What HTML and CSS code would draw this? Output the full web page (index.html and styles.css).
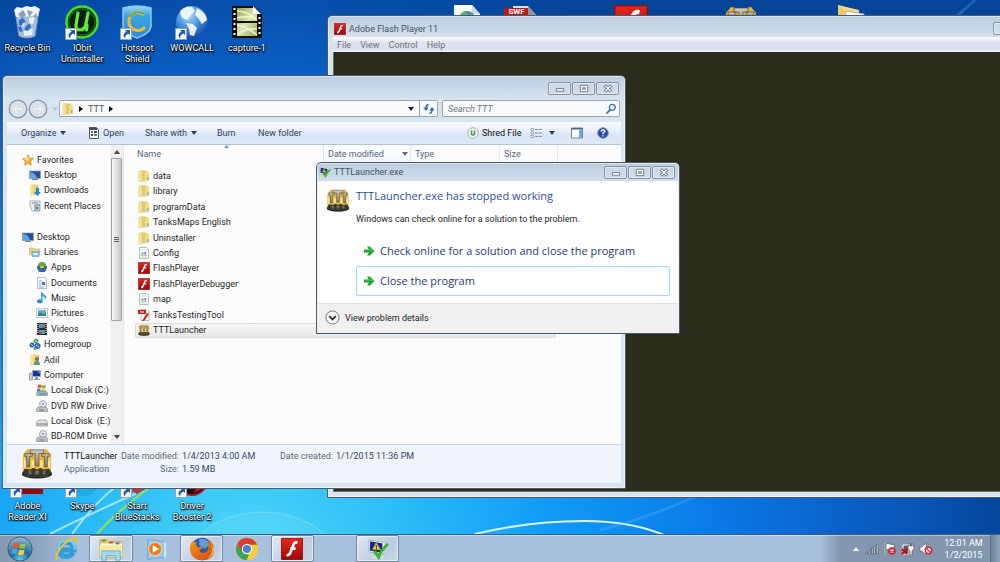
FILE: index.html
```html
<!DOCTYPE html>
<html lang="en">
<head>
<meta charset="utf-8">
<title>Desktop</title>
<link rel="stylesheet" href="styles.css">
</head>
<body>
<svg class="sprite" aria-hidden="true">
  <defs>
    <linearGradient id="gRed" x1="0" y1="0" x2="0" y2="1"><stop offset="0" stop-color="#e8261c"/><stop offset="1" stop-color="#9c0707"/></linearGradient>
    <linearGradient id="gFold" x1="0" y1="0" x2="1" y2="0"><stop offset="0" stop-color="#fbeea6"/><stop offset="1" stop-color="#dcbb52"/></linearGradient>
    <linearGradient id="gShield" x1="0" y1="0" x2="0" y2="1"><stop offset="0" stop-color="#9bd7f5"/><stop offset=".3" stop-color="#3ba5e6"/><stop offset="1" stop-color="#2a8ad6"/></linearGradient>
    <radialGradient id="gGlobe" cx=".4" cy=".3" r=".7"><stop offset="0" stop-color="#b5dcf8"/><stop offset=".5" stop-color="#4b97e0"/><stop offset="1" stop-color="#1c4bb2"/></radialGradient>
    <radialGradient id="gOrb" cx=".5" cy=".95" r=".9"><stop offset="0" stop-color="#5fd3ee"/><stop offset=".45" stop-color="#20689e"/><stop offset="1" stop-color="#8fb4cf"/></radialGradient>
    <linearGradient id="gFilm" x1="0" y1="0" x2="1" y2="1"><stop offset="0" stop-color="#8f9f45"/><stop offset=".5" stop-color="#dfe6b4"/><stop offset="1" stop-color="#94a74d"/></linearGradient>
    <linearGradient id="gFox" x1="0" y1="0" x2="1" y2="1"><stop offset="0" stop-color="#f79a1c"/><stop offset="1" stop-color="#d9440c"/></linearGradient>
    <linearGradient id="gMetal" x1="0" y1="0" x2="0" y2="1"><stop offset="0" stop-color="#cdccc6"/><stop offset="1" stop-color="#7c7b74"/></linearGradient>
  </defs>
  <symbol id="shortcut" viewBox="0 0 12 12"><path fill="#f4f8fc" stroke="#8ea4bb" d="M.5.5h11v11H.5z"/><path fill="#2358a5" d="M5 2h5v5L8.300 5.400C6 6.500 5 8 5.200 10.200 2.400 8 3.400 5 6.600 3.700z"/></symbol>
  <symbol id="recycle" viewBox="0 0 32 34"><path fill="#b9cbdc" stroke="#8ea6bb" d="M4 5l4 26q8 4 16 0l4-26z" opacity=".9"/><path fill="#eef4f9" d="M3 5l3-3 5 1 4-2 5 1 4-1 5 3-2 7-22 1z"/><path fill="#8da3b7" d="M7 9l5-4 3 5-4 4zM16 5l6 2-4 5zM22 11l4-3-1 7z"/><path fill="#fff" opacity=".75" d="M9 13l5 3-1 5-4 2zM18 13l6-1-2 7-4 1zM13 25l9-1-1 6-8 1z"/><path fill="#2d6fd0" d="M8 15l4-2 3 4-3 1-1 3-3-1zM15 21l4-3 1 4-3 4-4-1zM7 22l3-1 2 5-3 1z"/></symbol>
  <symbol id="iobit" viewBox="0 0 34 34"><circle cx="17" cy="17" r="15.500" fill="#0b1b0c" stroke="#4ddd23" stroke-width="2.500"/><circle cx="17" cy="17" r="13" fill="none" stroke="#155b16" stroke-width="2"/><path fill="none" stroke="#62ee30" stroke-width="3.200" stroke-linecap="round" d="M13 8l-2 12q-.5 5 4 5t6-6l2-11M22 20l-.4 5"/></symbol>
  <symbol id="hotspot" viewBox="0 0 32 34"><path fill="url(#gShield)" stroke="#8cc8ea" stroke-width="1.500" d="M2 3q14-4 28 0v19q-2 7-14 11Q4 29 2 22z"/><path fill="none" stroke="#f0ba2f" stroke-width="3" d="M23 10a9 9 0 1 0 1 12"/><path fill="none" stroke="#589c57" stroke-width="1.500" d="M23 9a10 10 0 0 0-14 3"/></symbol>
  <symbol id="wowcall" viewBox="0 0 34 34"><circle cx="17" cy="17" r="16" fill="url(#gGlobe)"/><path fill="#f2f8fd" opacity=".95" d="M5 6q6-6 12-4l3 4-5 5-2 4-4-1-3-3zM11 18l7 1 4 4-3 8-4-1-1-6zM22 3q9 4 10 12l-5 4-4-6-3-3z"/></symbol>
  <symbol id="capture" viewBox="0 0 30 34"><path fill="#111" d="M0 1h22l8 8v24H0z"/><path fill="url(#gFilm)" d="M5 3h16l4 6v7H5zM5 18h20v13H5z"/><path fill="none" stroke="#f1f5d5" stroke-width="1.500" d="M5 6q10 0 20 9M5 13q12-4 20 2M5 20q9 1 20 10M6 29q9-6 19-5"/><path fill="#fff" d="M21 1l8 8h-8z"/><path stroke="#fff" stroke-width="2" stroke-dasharray="2 3" d="M2.500 3v29M27.500 12v20"/></symbol>
  <symbol id="docglobe" viewBox="0 0 28 34"><path fill="#fff" d="M1 0h18l8 9v25H1z"/><path fill="#cbd6df" d="M19 0l8 9h-8z"/><circle cx="14" cy="14" r="8" fill="#3688bd"/><path fill="#5cb760" d="M8 8l5-1 3 3-5 5zM17 7l4 5-3 2z"/></symbol>
  <symbol id="swf" viewBox="0 0 34 34"><path fill="#d8dde1" d="M9 1h15l8 9v24H9z"/><path fill="#8f979e" d="M24 1l8 9h-8z"/><path fill="#c51519" d="M0 3h24v10H0z"/></symbol>
  <symbol id="flash" viewBox="0 0 24 24"><path fill="url(#gRed)" stroke="#8b1411" d="M.5.5h23v23H.5z"/><path fill="none" stroke="#fff" stroke-width="3" d="M18 5q-4-1-5 4l-2 5q-1 5-5 5M10 11.500h6"/></symbol>
  <symbol id="tank" viewBox="0 0 34 34"><path fill="#eeb62f" d="M2 8l5-6 10 2 10-2 5 6v17H2z"/><path fill="#fce48a" d="M3 11l4 7-4 6zM31 11l-4 7 4 6zM11 14h3v9h-3zM20 14h3v9h-3z"/><ellipse cx="17" cy="29" rx="16" ry="4.500" fill="#25261f"/><path fill="#383a30" d="M1 28l3-5 6 1 3-2 4 2 4-2 3 2 6-1 3 5-5 4H6z"/><path fill="url(#gMetal)" stroke="#4c4a42" stroke-width=".7" d="M4 7h8v3H9v11H6V10H4zM22 7h8v3h-2v11h-3V10h-3zM10 3h14v4h-5v13h-4V7h-5z"/><path fill="#6a6f5e" d="M8 25h3v4H8zM15 25h4v4h-4zM23 25h3v4h-3z"/></symbol>
  <symbol id="openfolder" viewBox="0 0 28 34"><path fill="#f4db81" d="M1 0l21 5v29H1z"/><path fill="#fff" stroke="#aaa" d="M9 6l18 3v25H9z"/><path fill="#e8c96b" d="M1 0l8 7v27l-8-5z"/></symbol>
  <symbol id="reader" viewBox="0 0 32 34"><path fill="#930b12" d="M0 0h32v31H0z"/></symbol>
  <symbol id="skype" viewBox="0 0 34 34"><rect x="1" y="0" width="32" height="33" rx="14" fill="#19aee5"/></symbol>
  <symbol id="bluestacks" viewBox="0 0 34 34"><path fill="#23569c" d="M4 12l13-5 14 7v9l-14 8-13-8z"/><circle cx="17" cy="25" r="5" fill="#d23136"/></symbol>
  <symbol id="booster" viewBox="0 0 34 34"><circle cx="17" cy="17" r="15" fill="#201012" stroke="#a9171c" stroke-width="2"/><path fill="#d91d22" d="M18 30l12-16-1 11z"/></symbol>

  <symbol id="folder" viewBox="0 0 12 12"><path fill="url(#gFold)" stroke="#d9bd62" stroke-width=".5" d="M1 1l4-.5V11L1 12zM5 1h4v10H5z"/><path fill="#f4dd87" d="M7 2h4v9H7z"/><path fill="#7cb6ad" d="M9 7h1.500v3H9z"/></symbol>
  <symbol id="star" viewBox="0 0 12 12"><path fill="#fcb03e" stroke="#da7b20" stroke-width=".7" d="M6 .7l1.600 3.500 3.800.5-2.800 2.600.8 3.900L6 9.300 2.600 11.200l.8-3.900L.6 4.700l3.800-.5z"/><path fill="#ffe28e" d="M6 2l1 3-3 3 .5-2L2 5z"/></symbol>
  <symbol id="monitor" viewBox="0 0 12 12"><path fill="#264f9d" stroke="#8799ae" stroke-width=".7" d="M.5 2h11v7.500H.5z"/><path fill="#5aa5e3" d="M1 3q5 0 7 6H1z"/><path fill="#6c7f91" d="M3 10h6v1H3z"/></symbol>
  <symbol id="download" viewBox="0 0 12 12"><path fill="url(#gFold)" d="M1 1l5-1v11l-5 1zM6 1h3v10H6z"/><path fill="#2488d8" d="M7 4h3v4h2l-3.500 4L5 8h2z"/></symbol>
  <symbol id="recent" viewBox="0 0 12 12"><path fill="#eef1f2" stroke="#87969e" stroke-width=".7" d="M1 1h10v4H6v6H3L1 6z"/><path stroke="#77858b" d="M3 3h6"/><path fill="#b9c8ce" stroke="#748890" stroke-width=".7" d="M6 5h5v6H6z"/><path fill="#467e9b" d="M7 7h2v2H7z"/></symbol>
  <symbol id="libraries" viewBox="0 0 12 12"><path fill="#ecd47a" stroke="#c7a33d" stroke-width=".5" d="M.5 2h4l1 1h5v6H.5z"/><path fill="#77bcdf" d="M2 5h9.500L10 11H3z"/><path fill="#e7f6fb" d="M4 7h5v2H4z"/></symbol>
  <symbol id="apps" viewBox="0 0 12 12"><path fill="#61a83e" d="M2 5Q2 1 6 1t4 4z"/><path fill="#34679d" d="M1 5h10v2l-2 4H3L1 7z"/><path fill="#d8be3b" d="M4 5h4v2H4z"/></symbol>
  <symbol id="docs" viewBox="0 0 12 12"><path fill="#fbfdfe" stroke="#92a0ae" stroke-width=".7" d="M1.500.5h7l2 2v9h-9z"/><path stroke="#80a8cb" d="M3 4h3M3 6h2M3 8h2M3 10h5"/><path fill="#3075ae" d="M6 5h3v3H6z"/></symbol>
  <symbol id="music" viewBox="0 0 12 12"><ellipse cx="3.800" cy="9.300" rx="2.800" ry="2" fill="#1f8fd3"/><path fill="#37a4e2" d="M5 0h1q1 2 4 4 1 2-1 4 0-3-2.500-4v5.500H5z"/></symbol>
  <symbol id="pictures" viewBox="0 0 12 12"><path fill="#f9fbfc" stroke="#9daeb6" stroke-width=".7" d="M.5 1.500h11v9H.5z"/><path fill="#62b5e3" d="M2 3h8v6H2z"/><path fill="#328675" d="M2 9V7l3-2 2 2 3-1v3z"/></symbol>
  <symbol id="videos" viewBox="0 0 12 12"><path fill="#272e33" d="M1 0h10v12H1z"/><path fill="#4a9bcb" d="M3 1h6v4H3zM3 7h6v4H3z"/><path fill="#a3632f" d="M6 3h3v2H6zM3 9h3v2H3z"/><path stroke="#fff" stroke-dasharray="1 1" d="M1.900 1v10M10.100 1v10"/></symbol>
  <symbol id="homegroup" viewBox="0 0 12 12"><circle cx="3" cy="7" r="2.500" fill="#2459bd"/><circle cx="7" cy="3" r="2.500" fill="#45a93f"/><circle cx="8.500" cy="8" r="3" fill="#2d63bd"/><path fill="none" stroke="#e5f6ff" stroke-width=".8" d="M1.500 6l3 2M5.500 2l3 2M7 7l3 2"/><circle cx="6" cy="10.500" r="1.500" fill="#4cb03c"/></symbol>
  <symbol id="user" viewBox="0 0 12 12"><path fill="url(#gFold)" d="M1 1l5-1v11l-5 1zM5 1h5v10H5z"/><circle cx="8" cy="5" r="2" fill="#8e6549"/><path fill="#4d9979" d="M5 11q0-4 3-4t3 4z"/></symbol>
  <symbol id="computer" viewBox="0 0 12 12"><path fill="#c6ccd1" stroke="#717c85" stroke-width=".6" d="M.5 4h3v7h-3z"/><path fill="#1431a8" stroke="#9babb9" d="M3.500 1.500h8v6h-8z"/><path fill="#5b90df" d="M8 2h3v3z"/><path fill="#88939c" d="M6 8h3v2h2v1H5v-1h1z"/></symbol>
  <symbol id="diskc" viewBox="0 0 12 12"><path fill="#ea542a" d="M2 1q2-1 3.500 0L5 4q-2-.6-3.500 0z"/><path fill="#78b536" d="M6 1q2 1 4 0l-.6 3q-2 1-3.800 0z"/><path fill="#3a81d0" d="M1 5q2-1 3.700 0L4 8H1z"/><path fill="#f6bf2d" d="M5.300 5q2 1 4 0L9 8H5z"/><path fill="#a8b2b9" stroke="#65727b" stroke-width=".5" d="M2 7h8l1.500 2v2.500H.5V9z"/><path stroke="#348bbb" d="M3 10h7"/></symbol>
  <symbol id="dvd" viewBox="0 0 12 12"><circle cx="7" cy="4" r="3.500" fill="#e6eaec" stroke="#7f8a91" stroke-width=".7"/><circle cx="7" cy="4" r="1" fill="#818d95"/><path fill="#bfc4c7" stroke="#777f84" stroke-width=".6" d="M2 7h8l1.500 2v2.500H.5V9z"/><path stroke="#697278" d="M3 10h5"/></symbol>
  <symbol id="disk" viewBox="0 0 12 12"><path fill="#dfe3e5" stroke="#777f84" stroke-width=".6" d="M2 5h8l1.500 2.500V11H.5V7.500z"/><path fill="#aab0b4" d="M1 8h10v2.500H1z"/><path fill="#53a446" d="M9 8.500h1v1H9z"/></symbol>
  <symbol id="config" viewBox="0 0 12 12"><path fill="#fff" stroke="#969da1" stroke-width=".7" d="M1.500.5h7l2 2v9h-9z"/><path stroke="#cad1d3" d="M2.500 3h6M3 10h6"/><path fill="#4d9a9b" d="M3.500 5.500h2v2h-2z"/><path fill="#5671af" d="M6.500 5H8v2.500H6.500z"/><path stroke="#9aa4a6" stroke-width=".6" d="M2.500 8.500h7"/></symbol>
  <symbol id="tool" viewBox="0 0 12 12"><path fill="#fff" stroke="#a0a0a0" stroke-width=".7" d="M3 .5h6l2 2v9H3z"/><path fill="#c81a17" d="M0 1h8v4H0zM9 4l2 1-5 7H4z"/><path stroke="#fff" d="M2 3h4"/></symbol>
  <symbol id="openicon" viewBox="0 0 12 12"><path fill="#fff" stroke="#4d5966" d="M1.500 .5h7l2 2v9h-9z"/><path fill="#404a58" d="M1 1h8v2H1z"/><path fill="#d6472b" d="M3 4h2v2H3z"/><path fill="#2551ae" d="M6 4h3v2H6zM3 7h2v2H3z"/><path fill="#4aa242" d="M6 7h3v2H6z"/></symbol>

  <symbol id="shred" viewBox="0 0 12 12"><circle cx="6" cy="6" r="5.300" fill="#edf3f5" stroke="#a9b4ba"/><path fill="none" stroke="#47973b" stroke-width="1.500" d="M4.500 3.500v3q0 1.500 1.500 1.500t1.500-1.500v-3"/></symbol>
  <symbol id="views" viewBox="0 0 12 12"><path fill="#fff" stroke="#7c8ba0" stroke-width=".7" d="M1 1.500h2.500v2H1zM1 5h2.500v2H1zM1 8.500h2.500v2H1z"/><path stroke="#7f8fa6" stroke-dasharray="3 .7" d="M5 2.500h7M5 6h7M5 9.500h7"/></symbol>
  <symbol id="pane" viewBox="0 0 12 12"><path fill="#fdfeff" stroke="#51657e" stroke-width=".8" d="M.5 1h11v10H.5z"/><path fill="#51657e" d="M.5 1h11v1.500H.5z"/><path fill="#64b1d5" d="M8 3h3v7.500H8z"/></symbol>
  <symbol id="help" viewBox="0 0 12 12"><circle cx="6" cy="6" r="5.300" fill="#2349ae" stroke="#8693a9"/><path fill="none" stroke="#fff" stroke-width="1.300" d="M4 4.600q.2-1.600 2-1.600t2 1.300Q8 5.200 6 6v1.200M6 8.300v1.200"/></symbol>
  <symbol id="search" viewBox="0 0 12 12"><circle cx="7.300" cy="4.300" r="3" fill="#e4f3fc" stroke="#356faf" stroke-width="1.200"/><path stroke="#356faf" stroke-width="1.800" stroke-linecap="round" d="M5 6.800L2 10"/></symbol>
  <symbol id="refresh" viewBox="0 0 12 12"><path fill="none" stroke="#2f6db5" stroke-width="1.500" d="M5.500 1.500Q3 2 3 5M6.500 10.500Q9 10 9 7"/><path fill="#2f6db5" d="M.3 4.500h5.400L3 8zM6.300 7.500h5.400L9 4z"/></symbol>
  <symbol id="caret" viewBox="0 0 6 4"><path fill="currentColor" d="M0 0h6L3 4z"/></symbol>
  <symbol id="caretr" viewBox="0 0 4 6"><path fill="#111" d="M0 0v6l4-3z"/></symbol>
  <symbol id="navback" viewBox="0 0 20 20"><circle cx="10" cy="10" r="8.700" fill="#dce4ec" stroke="#8d9aaa" stroke-width="1.400"/><path fill="#edf2f6" stroke="#ccd5de" stroke-width=".6" d="M4.500 10L9 5.500h2.200L8.500 8.700h7v2.600h-7l2.700 3.200H9z"/></symbol>
  <symbol id="go" viewBox="0 0 12 12"><path fill="#16a12c" d="M1 4.500h5L4 1.500h2.800L11.500 6 6.800 10.500H4l2-3H1z"/><path fill="#3fc948" d="M2 5.300h6L6 2l5 4H2z"/></symbol>
  <symbol id="chev" viewBox="0 0 16 16"><circle cx="8" cy="8" r="7" fill="#f5f5f5" stroke="#777"/><path fill="none" stroke="#333" stroke-width="2" d="M4.500 6.500L8 10l3.500-3.500"/></symbol>
  <symbol id="min" viewBox="0 0 10 10"><path fill="#fff" stroke="#68788b" d="M1 5h8v3H1z"/></symbol>
  <symbol id="max" viewBox="0 0 10 10"><path fill="#fff" stroke="#68788b" d="M1 1.500h8v7H1z"/><path fill="#aebccc" stroke="#68788b" stroke-width=".8" d="M3.500 4h3v2h-3z"/></symbol>
  <symbol id="close" viewBox="0 0 10 10"><path stroke="#68788b" stroke-width="3.600" d="M1.500 1.500l7 7M8.500 1.500l-7 7"/><path stroke="#fff" stroke-width="1.500" d="M2 2l6 6M8 2L2 8"/></symbol>

  <symbol id="problem" viewBox="0 0 24 24"><ellipse cx="12" cy="21" rx="7" ry="2.500" fill="#d6dadd"/><path fill="#eef3f6" stroke="#aab6bf" d="M2 2l18 3-2 13L2 15z"/><path fill="#1224a5" d="M3.500 3.500L17 6l-1 10-13-2.500z"/><path fill="#ffd531" stroke="#b08d0c" stroke-width=".6" d="M10 5l5 8-9-.5z"/><path stroke="#222" stroke-width="1.300" d="M10.200 8v2.500M10.300 11.300v1"/><path fill="#35c727" stroke="#168e16" stroke-width=".6" d="M7 15l2.500-1.500 3 4.500Q16 10 22 6l1.500 1.500Q16 14 13 23.500z"/></symbol>
  <symbol id="orb" viewBox="0 0 28 28"><circle cx="14" cy="14" r="13" fill="url(#gOrb)" stroke="#335779"/><path fill="#f1582b" d="M7 8q3-2 6-.3L12 13q-3-1.500-6 0z"/><path fill="#8cc63c" d="M14.300 8q3 1.500 6.200-.2L19.200 13q-3 1.700-6 0z"/><path fill="#44a5e8" d="M5.700 14.300q3-1.500 6 0l-1.300 5.200q-3-1.500-6 0z"/><path fill="#fcc935" d="M13 14.500q3 1.500 6 0L17.800 20q-3 1.500-6 0z"/></symbol>
  <symbol id="ie" viewBox="0 0 28 28"><path fill="none" stroke="#2f9fdc" stroke-width="5.500" d="M7 15h15.500Q22 7 14.500 7T7 14.500t7.500 7.500q5 0 7-4"/><path fill="none" stroke="#7fd4f7" stroke-width="2" d="M5.500 15q0-10 9-10t9 9.500"/><path fill="none" stroke="#f2c12c" stroke-width="2.200" d="M5 25q-4-2 3-12Q17 2 24 2q3 .5 1 6"/></symbol>
  <symbol id="explorer" viewBox="0 0 28 28"><path fill="#e7c668" stroke="#c8a13f" stroke-width=".7" d="M2 4h8l2 2h14v17H2z"/><path fill="#fff5c9" d="M3 8h23v3H3z"/><path fill="#f8e7a0" d="M2 10h24v12H2z"/><path stroke="#46a845" stroke-width="2" d="M4 5h4"/><path stroke="#cf4c39" stroke-width="2" d="M12 7h4"/><path stroke="#3b80c7" stroke-width="2" d="M19 8h4"/><path fill="#9cdbf2" stroke="#549cc3" stroke-width=".7" d="M4 16h20v10h-5v-5H9v5H4z"/></symbol>
  <symbol id="wmp" viewBox="0 0 28 28"><path fill="#9acdea" stroke="#65a5cb" d="M5 4l17 2v17L5 25z"/><path fill="#d5eefa" opacity=".8" d="M22 6l3 2v15h-3z"/><circle cx="13" cy="14" r="7" fill="#f27718" stroke="#ffd5a6"/><path fill="#fff" d="M10.500 10l7 4-7 4z"/></symbol>
  <symbol id="firefox" viewBox="0 0 28 28"><circle cx="14" cy="14" r="12" fill="#2b5aa9"/><path fill="#5b9ed9" d="M11 3q8-1 11 5l-4 6-7-4z"/><path fill="url(#gFox)" d="M4 5q2 2 5 2-3 3 1 5l5-1q1 2-4 4 1 4 6 3 3-1 4-4 0-5-3-7 3 0 4 2 0-3-3-6 8 4 8 11 0 12-13 12Q1 25 1 13q0-5 3-8z"/><path fill="#ffdc43" opacity=".8" d="M24 9q4 10-5 15 7-1 8-10z"/></symbol>
  <symbol id="chrome" viewBox="0 0 28 28"><circle cx="14" cy="14" r="12" fill="#f5cf36"/><path fill="#dc3d31" d="M3.300 8.500A12 12 0 0 1 25 9.500H14L8.500 17z"/><path fill="#40a34d" d="M3.300 8.500L9 17l7 3-2.500 6A12 12 0 0 1 3.300 8.500z"/><circle cx="14" cy="14" r="5.600" fill="#fff"/><circle cx="14" cy="14" r="4.400" fill="#4385ce"/></symbol>
  <symbol id="signal" viewBox="0 0 14 12"><path fill="#dde3e8" stroke="#454f59" stroke-width=".6" d="M1 9h1.500v2H1zM4 7h1.500v4H4zM6.500 5H8v6H6.500zM9 3h1.500v8H9zM11.500 1H13v10h-1.500z"/></symbol>
  <symbol id="flag" viewBox="0 0 14 12"><path stroke="#555" stroke-width="2.200" d="M2 0v12"/><path stroke="#fff" d="M2 0v12"/><path fill="#fff" stroke="#555" stroke-width=".7" d="M3 1q3-1 4 0t4 0v6q-3 1-4 0T3 7z"/><circle cx="9" cy="8" r="3.800" fill="#d8222a"/><path stroke="#fff" stroke-width="1.200" d="M7.500 6.500l3 3M10.500 6.500l-3 3"/></symbol>
  <symbol id="battery" viewBox="0 0 14 12"><path fill="#585f67" stroke="#fff" d="M2 2h6v9H2z"/><path fill="#fff" stroke="#444" stroke-width=".6" d="M7 3h1V0h1v3h2V0h1v3h1v3l-2 2v4H9V8L7 6z"/><path stroke="#d4000b" stroke-width="2" d="M1 6l5 5M6 6l-5 5"/></symbol>
  <symbol id="speaker" viewBox="0 0 14 12"><path fill="#fff" stroke="#555" stroke-width=".6" d="M1 4h2l4-4v12L3 8H1z"/><circle cx="9.500" cy="7.500" r="3.200" fill="#fff" stroke="#d8222a" stroke-width="1.500"/><path stroke="#d8222a" stroke-width="1.300" d="M7.500 5.500l4 4"/></symbol>
</svg>

<div class="screen">
  <main class="desktop">
    <svg class="rays" viewBox="0 0 1000 534" preserveAspectRatio="none" aria-hidden="true">
      <g fill="none">
        <path class="halo" d="M200 534Q225 512 262 512T325 534"/>
        <path class="ray-soft" d="M50 534Q85 516 155 485M72 534Q94 503 118 485"/>
        <path class="ray-green" d="M97 534Q118 510 153 485"/>
        <path class="ray-white" d="M475 534Q530 521 585 521 630 521 664 535"/>
        <path class="ray-far" d="M600 530Q650 518 710 490M957 16L975 0"/>
      </g>
    </svg>
    <div class="icon-grid">
      <a class="shortcut c1" href="#"><span class="pic"><svg><use href="#recycle"/></svg></span>Recycle Bin</a>
      <a class="shortcut c2" href="#"><span class="pic"><svg><use href="#iobit"/></svg><svg class="badge"><use href="#shortcut"/></svg></span>IObit<br>Uninstaller</a>
      <a class="shortcut c3" href="#"><span class="pic"><svg><use href="#hotspot"/></svg><svg class="badge"><use href="#shortcut"/></svg></span>Hotspot<br>Shield</a>
      <a class="shortcut c4" href="#"><span class="pic"><svg><use href="#wowcall"/></svg><svg class="badge"><use href="#shortcut"/></svg></span>WOWCALL</a>
      <a class="shortcut c5" href="#"><span class="pic"><svg><use href="#capture"/></svg></span>capture-1</a>
      <a class="shortcut c9" href="#" aria-label="Web page"><span class="pic"><svg><use href="#docglobe"/></svg></span></a>
      <a class="shortcut c10" href="#"><span class="pic"><svg><use href="#swf"/></svg><b class="swf-label">SWF</b></span></a>
      <a class="shortcut c12" href="#" aria-label="Flash"><span class="pic"><svg><use href="#flash"/></svg></span></a>
      <a class="shortcut c14" href="#" aria-label="Launcher"><span class="pic"><svg><use href="#tank"/></svg></span></a>
      <a class="shortcut c16" href="#" aria-label="Folder"><span class="pic"><svg><use href="#openfolder"/></svg></span></a>
    </div>
    <div class="icon-grid">
      <a class="shortcut c1" href="#"><span class="pic"><svg><use href="#reader"/></svg><svg class="badge"><use href="#shortcut"/></svg></span>Adobe<br>Reader XI</a>
      <a class="shortcut c2" href="#"><span class="pic"><svg><use href="#skype"/></svg><svg class="badge"><use href="#shortcut"/></svg></span>Skype</a>
      <a class="shortcut c3" href="#"><span class="pic"><svg><use href="#bluestacks"/></svg><svg class="badge"><use href="#shortcut"/></svg></span>Start<br>BlueStacks</a>
      <a class="shortcut c4" href="#"><span class="pic"><svg><use href="#booster"/></svg><svg class="badge"><use href="#shortcut"/></svg></span>Driver<br>Booster 2</a>
    </div>

    <section class="window flash-window" aria-label="Adobe Flash Player 11">
      <header class="titlebar">
        <svg class="title-icon"><use href="#flash"/></svg><h2 class="title">Adobe Flash Player 11</h2>
        <div class="controls"><button class="ctl" aria-label="Minimize"></button></div>
      </header>
      <nav class="menubar"><button>File</button><button>View</button><button>Control</button><button>Help</button></nav>
      <div class="stage"></div>
    </section>

    <section class="window explorer-window" aria-label="TTT">
      <header class="titlebar">
        <div class="controls">
          <button class="ctl" aria-label="Minimize"><svg><use href="#min"/></svg></button>
          <button class="ctl" aria-label="Maximize"><svg><use href="#max"/></svg></button>
          <button class="ctl" aria-label="Close"><svg><use href="#close"/></svg></button>
        </div>
      </header>
      <div class="address-row">
        <div class="nav-buttons">
          <button aria-label="Back"><svg class="nav"><use href="#navback"/></svg></button>
          <button aria-label="Forward"><svg class="nav flip"><use href="#navback"/></svg></button>
          <button class="faint" aria-label="Recent pages"><svg class="caret"><use href="#caret"/></svg></button>
        </div>
        <div class="address">
          <svg class="ico"><use href="#folder"/></svg>
          <svg class="caretr"><use href="#caretr"/></svg>
          <button class="crumb">TTT</button>
          <svg class="caretr"><use href="#caretr"/></svg>
          <button class="drop" aria-label="Previous locations"><svg class="caret"><use href="#caret"/></svg></button>
          <button class="reload" aria-label="Refresh"><svg class="ico"><use href="#refresh"/></svg></button>
        </div>
        <label class="search"><input type="text" placeholder="Search TTT" aria-label="Search TTT"><svg class="ico"><use href="#search"/></svg></label>
      </div>
      <div class="toolbar">
        <button class="t-organize">Organize <svg class="caret"><use href="#caret"/></svg></button>
        <button class="t-open"><svg class="ico"><use href="#openicon"/></svg>Open</button>
        <button class="t-share">Share with <svg class="caret"><use href="#caret"/></svg></button>
        <button class="t-burn">Burn</button>
        <button>New folder</button>
        <button class="t-shred"><svg class="ico"><use href="#shred"/></svg>Shred File</button>
        <button class="t-views" aria-label="Change view"><svg class="ico"><use href="#views"/></svg><svg class="caret"><use href="#caret"/></svg></button>
        <button class="t-pane" aria-label="Preview pane"><svg class="ico"><use href="#pane"/></svg></button>
        <button aria-label="Help"><svg class="ico"><use href="#help"/></svg></button>
      </div>
      <div class="browser">
        <nav class="tree">
          <a class="l1" href="#"><svg class="ico"><use href="#star"/></svg>Favorites</a>
          <a class="l2" href="#"><svg class="ico"><use href="#monitor"/></svg>Desktop</a>
          <a class="l2" href="#"><svg class="ico"><use href="#download"/></svg>Downloads</a>
          <a class="l2" href="#"><svg class="ico"><use href="#recent"/></svg>Recent Places</a>
          <span class="blank"></span>
          <a class="l1" href="#"><svg class="ico"><use href="#monitor"/></svg>Desktop</a>
          <a class="l2" href="#"><svg class="ico"><use href="#libraries"/></svg>Libraries</a>
          <a class="l3" href="#"><svg class="ico"><use href="#apps"/></svg>Apps</a>
          <a class="l3" href="#"><svg class="ico"><use href="#docs"/></svg>Documents</a>
          <a class="l3" href="#"><svg class="ico"><use href="#music"/></svg>Music</a>
          <a class="l3" href="#"><svg class="ico"><use href="#pictures"/></svg>Pictures</a>
          <a class="l3" href="#"><svg class="ico"><use href="#videos"/></svg>Videos</a>
          <a class="l2" href="#"><svg class="ico"><use href="#homegroup"/></svg>Homegroup</a>
          <a class="l2" href="#"><svg class="ico"><use href="#user"/></svg>Adil</a>
          <a class="l2" href="#"><svg class="ico"><use href="#computer"/></svg>Computer</a>
          <a class="l3" href="#"><svg class="ico"><use href="#diskc"/></svg>Local Disk (C:)</a>
          <a class="l3" href="#"><svg class="ico"><use href="#dvd"/></svg>DVD RW Drive (</a>
          <a class="l3" href="#"><svg class="ico"><use href="#disk"/></svg>Local Disk&nbsp; (E:)</a>
          <a class="l3" href="#"><svg class="ico"><use href="#dvd"/></svg>BD-ROM Drive</a>
        </nav>
        <div class="scrollbar">
          <svg class="caret up"><use href="#caret"/></svg>
          <div class="thumb"><i></i><i></i><i></i></div>
          <svg class="caret down"><use href="#caret"/></svg>
        </div>
        <table class="files">
          <thead><tr><th class="sorted">Name<svg class="caret up"><use href="#caret"/></svg></th><th class="hot">Date modified<svg class="caret"><use href="#caret"/></svg></th><th>Type</th><th>Size</th></tr></thead>
          <tbody>
            <tr><td><svg class="ico"><use href="#folder"/></svg>data</td></tr>
            <tr><td><svg class="ico"><use href="#folder"/></svg>library</td></tr>
            <tr><td><svg class="ico"><use href="#folder"/></svg>programData</td></tr>
            <tr><td><svg class="ico"><use href="#folder"/></svg>TanksMaps English</td></tr>
            <tr><td><svg class="ico"><use href="#folder"/></svg>Uninstaller</td></tr>
            <tr><td><svg class="ico"><use href="#config"/></svg>Config</td></tr>
            <tr><td><svg class="ico"><use href="#flash"/></svg>FlashPlayer</td></tr>
            <tr><td><svg class="ico"><use href="#flash"/></svg>FlashPlayerDebugger</td></tr>
            <tr><td><svg class="ico"><use href="#config"/></svg>map</td></tr>
            <tr><td><svg class="ico"><use href="#tool"/></svg>TanksTestingTool</td></tr>
            <tr class="selected"><td><svg class="ico"><use href="#tank"/></svg>TTTLauncher</td></tr>
          </tbody>
        </table>
      </div>
      <footer class="details">
        <svg class="big"><use href="#tank"/></svg>
        <dl class="facts">
          <dd class="name">TTTLauncher</dd><dt>Date modified:</dt><dd>1/4/2013 4:00 AM</dd><dt>Date created:</dt><dd>1/1/2015 11:36 PM</dd>
          <dd class="kind">Application</dd><dt>Size:</dt><dd>1.59 MB</dd>
        </dl>
      </footer>
    </section>

    <section class="window dialog" role="dialog" aria-label="TTTLauncher.exe">
      <header class="titlebar">
        <svg class="title-icon"><use href="#problem"/></svg><h2 class="title">TTTLauncher.exe</h2>
        <div class="controls">
          <button class="ctl" aria-label="Minimize"><svg><use href="#min"/></svg></button>
          <button class="ctl" aria-label="Maximize"><svg><use href="#max"/></svg></button>
          <button class="ctl" aria-label="Close"><svg><use href="#close"/></svg></button>
        </div>
      </header>
      <div class="message">
        <svg class="app"><use href="#tank"/></svg>
        <div class="message-text">
          <h1>TTTLauncher.exe has stopped working</h1>
          <p>Windows can check online for a solution to the problem.</p>
          <button class="command"><svg class="ico"><use href="#go"/></svg>Check online for a solution and close the program</button>
          <button class="command focused"><svg class="ico"><use href="#go"/></svg>Close the program</button>
        </div>
      </div>
      <footer class="more"><button><svg class="chev"><use href="#chev"/></svg>View problem details</button></footer>
    </section>
  </main>

  <nav class="taskbar">
    <button class="start" aria-label="Start"><svg><use href="#orb"/></svg></button>
    <div class="tasks">
      <button class="task" aria-label="Internet Explorer"><svg><use href="#ie"/></svg></button>
      <button class="task open" aria-label="Explorer"><svg><use href="#explorer"/></svg></button>
      <button class="task" aria-label="Media Player"><svg><use href="#wmp"/></svg></button>
      <button class="task open" aria-label="Firefox"><svg><use href="#firefox"/></svg></button>
      <button class="task" aria-label="Chrome"><svg><use href="#chrome"/></svg></button>
      <button class="task open" aria-label="Flash Player"><svg class="square"><use href="#flash"/></svg></button>
    </div>
    <button class="task open report" aria-label="Problem report"><svg class="square"><use href="#problem"/></svg></button>
    <div class="tray">
      <svg class="caret up"><use href="#caret"/></svg>
      <svg><use href="#signal"/></svg><svg><use href="#flag"/></svg><svg><use href="#battery"/></svg><svg><use href="#speaker"/></svg>
    </div>
    <time class="clock">12:01 AM<br>1/2/2015</time>
    <button class="peek" aria-label="Show desktop"></button>
  </nav>
</div>
</body>
</html>
```
FILE: styles.css
```css
:root {
  --ui: Roboto, "Open Sans", sans-serif;
  --ui-large: "Open Sans", "Noto Sans", sans-serif;
  --frame: #d7e4f2;
  --ink: #1e1e1e;
}
* { box-sizing: border-box; }
body { margin: 0; font: 9px/12px var(--ui); color: var(--ink); }
button { border: 0; padding: 0; margin: 0; background: none; font: inherit; color: inherit; text-align: left; }
a { color: inherit; text-decoration: none; }
h1, h2, p, dl, dd { margin: 0; font-weight: 400; }
svg { display: block; flex: none; }
.sprite { position: absolute; width: 0; height: 0; }
.ico { width: 12px; height: 12px; }
.caret { width: 6px; height: 4px; }
.caretr { width: 4px; height: 6px; }
.up { transform: rotate(180deg); }

.screen { display: flex; flex-direction: column; height: 100vh; overflow: hidden; }

/* Desktop */
.desktop {
  position: relative; flex: 1; min-height: 0; overflow: hidden;
  display: flex; flex-direction: column; justify-content: space-between;
  padding: 5px 12px 11px 0;
  background: radial-gradient(ellipse 76% 110% at 25% 102%, #4fd6f8 0, #2fc0f7 18%, #0f9bf5 40%, #0a78e6 62%, #0a5cc0 82%, #04459a 100%);
}
.rays { position: absolute; inset: 0; width: 100%; height: 100%; }
.halo { fill: #8be6f8; fill-opacity: .15; stroke: #a4ecfa; stroke-opacity: .4; }
.ray-soft { stroke: #d9f6ff; stroke-width: 2; stroke-opacity: .7; }
.ray-green { stroke: #9be04b; stroke-width: 2; }
.ray-white { stroke: #d8f3ff; stroke-width: 2; }
.ray-far { stroke: #6cc1ff; stroke-width: 3; stroke-opacity: .25; }

.icon-grid { position: relative; display: grid; grid-template-columns: repeat(18, 1fr); height: 60px; }
.shortcut { grid-row: 1; text-align: center; line-height: 11px; color: #fff; white-space: nowrap; text-shadow: 0 1px 1px #000, 1px 1px 2px #000, 0 0 2px #000; }
.pic { position: relative; display: block; width: 34px; height: 35px; margin: 0 auto 3px; }
.pic svg { width: 34px; height: 34px; }
.pic .badge { position: absolute; left: 0; bottom: 0; width: 12px; height: 12px; }
.swf-label { position: absolute; left: 4px; top: 2px; font-size: 8px; line-height: 10px; text-shadow: none; }
.c1 { grid-column: 1; } .c2 { grid-column: 2; } .c3 { grid-column: 3; } .c4 { grid-column: 4; } .c5 { grid-column: 5; }
.c9 { grid-column: 9; } .c10 { grid-column: 10; } .c12 { grid-column: 12; } .c14 { grid-column: 14; } .c16 { grid-column: 16; }

/* Windows */
.window {
  position: absolute; display: flex; flex-direction: column;
  border: 1px solid #4c5b69; border-radius: 5px 5px 0 0;
  background: linear-gradient(#bccddd, var(--frame) 24px);
  box-shadow: inset 0 0 0 1px rgba(255, 255, 255, .45);
}
.titlebar { display: flex; align-items: center; }
.title { font-size: 9px; color: #46525f; }
.title-icon { width: 12px; height: 12px; margin-right: 3px; }
.controls { display: flex; gap: 1px; margin-left: auto; }
.ctl { display: grid; place-items: center; width: 23px; height: 13px; border: 1px solid #8493a8; border-radius: 2px; background: rgba(205, 219, 234, .6); box-shadow: inset 0 0 0 1px rgba(255, 255, 255, .4); }
.ctl svg { width: 10px; height: 9px; }

.flash-window { left: 327px; right: -22px; top: 15px; bottom: 36px; padding: 0 5px 5px; }
.flash-window .titlebar { height: 21px; padding: 4px 0 0 1px; }
.menubar { display: flex; gap: 9px; height: 15px; padding-left: 4px; color: #6e737d; background: linear-gradient(#fff, #dde1f2 40%, #dde1f2 85%, #f4f6fb); }
.stage { flex: 1; border: 1px solid #6e7360; border-top: 0; background: #2b2b1b; }

/* Explorer */
.explorer-window { left: 2px; top: 75px; bottom: 45px; width: 624px; padding: 0 4px 5px; }
.explorer-window .titlebar { height: 24px; padding: 1px 2px 0 0; }
.address-row { display: flex; align-items: center; height: 17px; margin-bottom: 5px; }
.nav-buttons { display: flex; align-items: center; width: 52px; padding-left: 1px; }
.nav { width: 20px; height: 20px; }
.nav-buttons .caret { margin-left: 4px; }
.flip { transform: scaleX(-1); }
.faint { color: #bcc8d4; }
.address, .search { display: flex; align-items: center; height: 17px; border: 1px solid #97a4b2; border-radius: 2px; background: #f8fafc; }
.address { flex: 1; gap: 5px; padding-left: 2px; color: #4e5a68; }
.drop { margin-left: auto; color: #121c4a; }
.reload { display: grid; place-items: center; width: 18px; height: 15px; border-left: 1px solid #97a4b2; }
.search { width: 178px; margin: 0 1px 0 4px; padding: 0 2px 0 5px; }
.search input { flex: 1; min-width: 0; border: 0; padding: 0; background: none; font: italic 9px/12px var(--ui); }
.search input::placeholder { color: #6f757b; opacity: 1; }

.toolbar { display: flex; align-items: center; height: 23px; padding: 0 12px 0 14px; color: #2c4061; background: linear-gradient(#fafcff, #e6eefa 45%, #d9e5f5 55%, #dfe9f7); border-bottom: 1px solid #b4c4d8; white-space: nowrap; }
.toolbar button { display: flex; align-items: center; gap: 4px; }
.toolbar .t-organize { width: 67px; }
.toolbar .t-open { width: 57px; gap: 3px; }
.toolbar .t-share { width: 72px; }
.toolbar .t-burn { width: 41px; }
.toolbar .t-shred { margin-left: auto; width: 63px; gap: 3px; color: #111; }
.toolbar .t-views { width: 41px; gap: 7px; }
.toolbar .t-pane { width: 26px; }

.browser { flex: 1; min-height: 0; display: flex; background: #fcfcfc; }
.tree { flex: none; display: flex; flex-direction: column; width: 103px; padding: 7px 0 0; overflow: hidden; }
.tree a, .blank { flex: 1; display: flex; align-items: center; gap: 3px; white-space: nowrap; }
.tree .l1 { padding-left: 15px; }
.tree .l2 { padding-left: 22px; }
.tree .l3 { padding-left: 29px; }
.scrollbar { flex: none; display: flex; flex-direction: column; align-items: center; width: 13px; padding: 5px 0; background: #f0f0f0; color: #444; }
.thumb { display: grid; align-content: center; justify-items: center; gap: 1px; width: 11px; height: 163px; margin-top: 4px; border: 1px solid #a3a3a3; border-radius: 1px; background: linear-gradient(90deg, #f6f6f6, #e2e2e4 45%, #c8c8cb); }
.thumb i { width: 5px; height: 1px; background: #606060; }
.down { margin-top: auto; }

.files { flex: 1; display: flex; flex-direction: column; border-left: 1px solid #dfe6f0; white-space: nowrap; }
.files thead, .files tbody { display: flex; flex-direction: column; }
.files tr { flex: 1; display: grid; grid-template-columns: 199px 88px 89px 58px; }
.files thead { height: 18px; color: #56667e; }
.files th { position: relative; display: flex; align-items: center; justify-content: space-between; padding: 0 4px; font-weight: 400; border-right: 1px solid #e1e7ef; }
.files .sorted { padding-left: 13px; border-right: 0; }
.sorted .caret { position: absolute; left: 50%; top: 0; width: 5px; height: 3px; color: #5f93bf; }
.files .hot { padding-right: 2px; border-left: 1px solid #dbe4ef; background: linear-gradient(#fff, #f2f5f9); }
.files tbody { height: 170px; margin: 5px 65px 0 11px; }
.files tbody tr { grid-template-columns: 1fr; }
.files td { display: flex; align-items: center; gap: 3px; padding: 0 3px; }
.selected { border-radius: 2px; background: linear-gradient(#f8f8f8, #e6e6e6); box-shadow: inset 0 0 0 1px #dcdcdc; }

.details { display: flex; align-items: center; gap: 10px; height: 39px; padding: 0 0 2px 13px; background: #f0f4fb; border-top: 1px solid #c8d4e8; }
.big { width: 34px; height: 32px; }
.facts { display: grid; grid-template-columns: 53px 59px 94px 54px auto; column-gap: 3px; line-height: 13px; color: #34466b; white-space: nowrap; }
.facts dt { text-align: right; color: #5b6a80; }
.facts .name { color: #111; }
.facts .kind { color: #5b6a80; }

/* Problem dialog */
.dialog { left: 316px; top: 162px; width: 364px; }
.dialog .titlebar { height: 18px; padding: 0 4px 0 2px; }
.message { display: flex; gap: 6px; margin: 0 1px; padding: 7px 8px; background: #fff; }
.app { width: 24px; height: 24px; }
.message-text { flex: 1; }
.message h1 { font: 11px/16px var(--ui-large); color: #1f4da3; }
.message p { margin: 9px 0 11px; }
.command { display: flex; align-items: center; gap: 5px; width: 100%; height: 30px; padding-left: 6px; border: 1px solid transparent; border-radius: 2px; font: 11px/16px var(--ui-large); color: #1e3a72; white-space: nowrap; }
.focused { border-color: #8fe0f3; }
.more { margin: 0 1px 1px; padding: 6px 7px 7px; border-top: 1px solid #e0e0e0; background: #f0f0f0; }
.more button { display: flex; align-items: center; gap: 5px; }
.chev { width: 15px; height: 15px; }

/* Taskbar */
.taskbar { display: flex; height: 28px; border-top: 1px solid #3f5e7c; background: linear-gradient(90deg, #8798b0 0, #8b9fb9 30px, #a7c0dd 80px, #a7c0dd calc(100% - 180px), #8296ae calc(100% - 160px), #8296ae 100%); box-shadow: inset 0 1px rgba(255, 255, 255, .4); }
.taskbar svg { width: 26px; height: 26px; }
.start { display: grid; place-items: center; width: 40px; margin-right: 4px; }
.tasks { display: flex; gap: 2px; width: 270px; }
.task { flex: 1; display: grid; place-items: center; border: 1px solid transparent; border-radius: 2px; }
.task.open { border-color: #71839b; background: linear-gradient(135deg, #e2eaf3, #bccde0 60%, #c5d6e8); box-shadow: inset 0 0 0 1px rgba(255, 255, 255, .6); }
.taskbar .square { width: 22px; height: 22px; }
.report { flex: none; width: 43px; margin-left: 42px; }
.tray { display: flex; align-items: center; gap: 4px; margin-left: auto; color: #fff; }
.tray svg { width: 14px; height: 12px; }
.tray .caret { width: 6px; height: 4px; margin-right: 2px; }
.clock { width: 53px; margin-left: 4px; padding-top: 2px; text-align: center; color: #fff; }
.peek { width: 10px; border-left: 1px solid #5d7085; background: linear-gradient(90deg, #6f8299, #93a5ba); }
```
